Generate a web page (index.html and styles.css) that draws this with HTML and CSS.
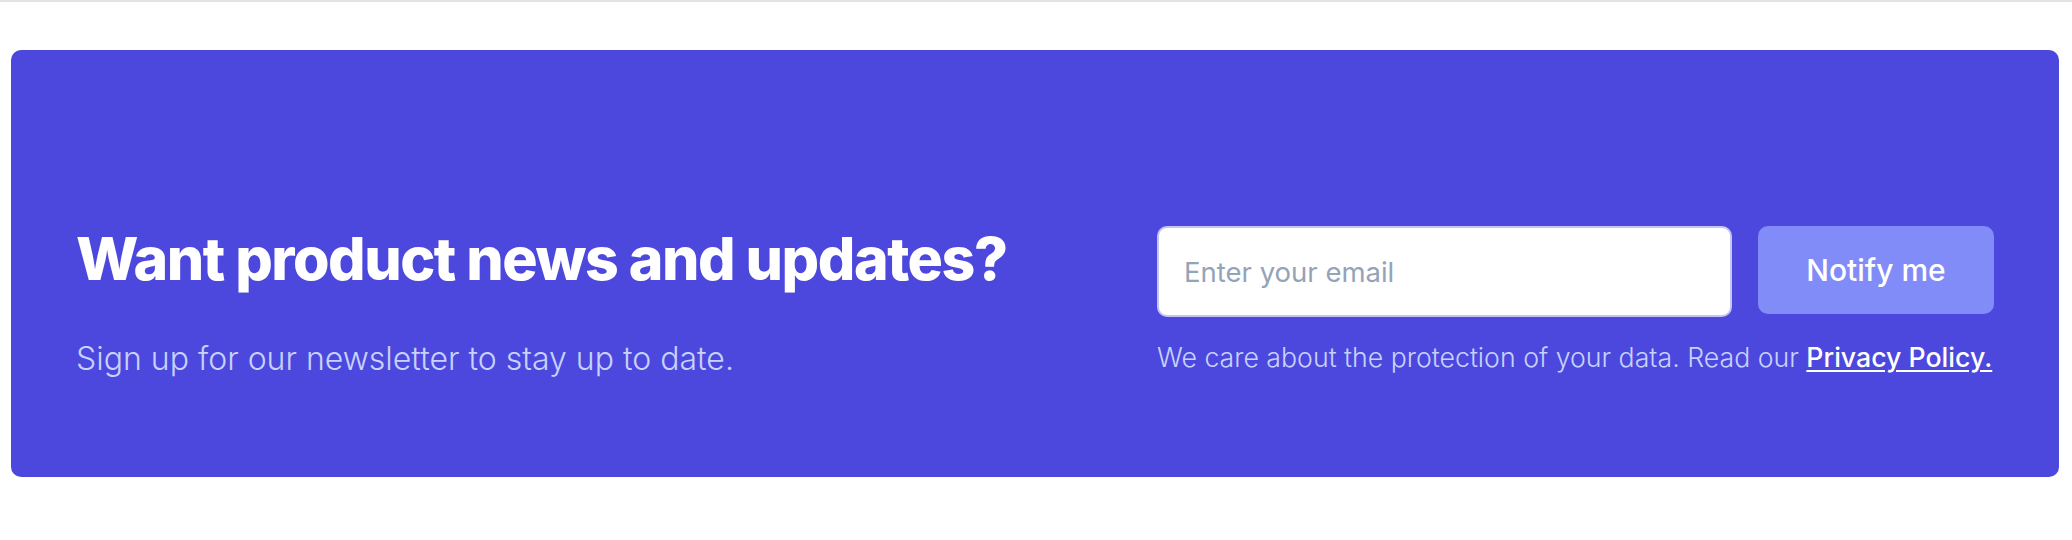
FILE: index.html
```html
<!DOCTYPE html>
<html lang="en">
<head>
<meta charset="utf-8">
<title>Newsletter</title>
<link rel="stylesheet" href="styles.css">
</head>
<body>
<div class="page">
  <section class="banner">
    <div class="intro">
      <h2 class="title">Want product news and updates?</h2>
      <p class="lead">Sign up for our newsletter to stay up to date.</p>
    </div>
    <div class="signup">
      <form class="form">
        <input class="email" type="email" placeholder="Enter your email">
        <button class="notify" type="button">Notify me</button>
      </form>
      <p class="fine">We care about the protection of your data. Read our <a class="policy" href="#">Privacy Policy.</a></p>
    </div>
  </section>
</div>
</body>
</html>
```

FILE: styles.css
```css
* { box-sizing: border-box; }
html, body { margin: 0; padding: 0; background: #ffffff; }
body {
  font-family: "Inter", "Liberation Sans", sans-serif;
  border-top: 2px solid #e3e3e3;
}
.page {
  padding: 48px 13px 0 11px;
}
.banner {
  background: #4d48dd;
  border-radius: 10px;
  height: 427px;
  display: flex;
  align-items: flex-start;
  justify-content: space-between;
  padding: 174px 65px 0 65px;
}
.intro { display: flex; flex-direction: column; }
.title {
  margin: 0;
  color: #ffffff;
  font-size: 59px;
  line-height: 70px;
  font-weight: 800;
  letter-spacing: -0.025em;
}
.lead {
  margin: 40px 0 0;
  color: #c7d2fe;
  font-size: 32px;
  line-height: 49px;
  font-weight: 300;
}
.signup { width: 837px; display: flex; flex-direction: column; margin-top: 2px; }
.form { display: flex; gap: 26px; margin: 0; align-items: flex-start; }
.email {
  width: 575px;
  height: 91px;
  border: 2px solid #c3c6f2;
  border-radius: 10px;
  background: #ffffff;
  padding: 0 25px;
  font-family: inherit;
  font-size: 27.5px;
  color: #0f172a;
  outline: none;
}
.email::placeholder { color: #94a3b8; }
.notify {
  width: 236px;
  height: 88px;
  border: 0;
  border-radius: 10px;
  background: #818cf8;
  color: #ffffff;
  font-family: inherit;
  font-size: 30px;
  font-weight: 500;
  cursor: pointer;
}
.fine {
  margin: 23px 0 0;
  color: #c7d2fe;
  font-size: 26.7px;
  line-height: 35px;
  font-weight: 300;
}
.policy {
  color: #ffffff;
  font-weight: 500;
  text-decoration: underline;
  text-underline-offset: 3px;
}
```
